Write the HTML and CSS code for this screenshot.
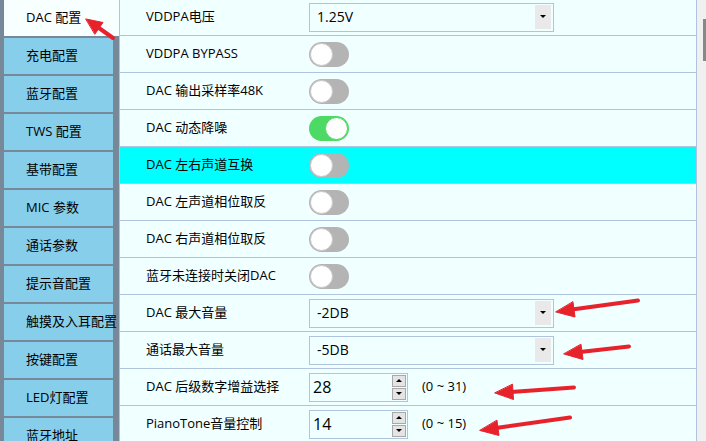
FILE: index.html
```html
<!DOCTYPE html>
<html lang="zh">
<head>
<meta charset="utf-8">
<title>DAC 配置</title>
<link rel="stylesheet" href="styles.css">
</head>
<body>
<div class="app">
  <nav class="tabs">
    <div class="tab active">DAC 配置</div>
    <div class="tab">充电配置</div>
    <div class="tab">蓝牙配置</div>
    <div class="tab">TWS 配置</div>
    <div class="tab">基带配置</div>
    <div class="tab">MIC 参数</div>
    <div class="tab">通话参数</div>
    <div class="tab">提示音配置</div>
    <div class="tab">触摸及入耳配置</div>
    <div class="tab">按键配置</div>
    <div class="tab">LED灯配置</div>
    <div class="tab">蓝牙地址</div>
  </nav>
  <main class="panel">
    <div class="rows">
      <div class="row">
        <div class="label">VDDPA电压</div>
        <div class="select"><span>1.25V</span><span class="drop"><i class="tri-down"></i></span></div>
      </div>
      <div class="row">
        <div class="label">VDDPA BYPASS</div>
        <div class="toggle"><span class="knob"></span></div>
      </div>
      <div class="row">
        <div class="label">DAC 输出采样率48K</div>
        <div class="toggle"><span class="knob"></span></div>
      </div>
      <div class="row">
        <div class="label">DAC 动态降噪</div>
        <div class="toggle on"><span class="knob"></span></div>
      </div>
      <div class="row hl">
        <div class="label">DAC 左右声道互换</div>
        <div class="toggle"><span class="knob"></span></div>
      </div>
      <div class="row">
        <div class="label">DAC 左声道相位取反</div>
        <div class="toggle"><span class="knob"></span></div>
      </div>
      <div class="row">
        <div class="label">DAC 右声道相位取反</div>
        <div class="toggle"><span class="knob"></span></div>
      </div>
      <div class="row">
        <div class="label">蓝牙未连接时关闭DAC</div>
        <div class="toggle"><span class="knob"></span></div>
      </div>
      <div class="row">
        <div class="label">DAC 最大音量</div>
        <div class="select"><span>-2DB</span><span class="drop"><i class="tri-down"></i></span></div>
      </div>
      <div class="row">
        <div class="label">通话最大音量</div>
        <div class="select"><span>-5DB</span><span class="drop"><i class="tri-down"></i></span></div>
      </div>
      <div class="row">
        <div class="label">DAC 后级数字增益选择</div>
        <div class="spin"><span class="val">28</span><span class="btns"><span class="btn"><i class="tri-up"></i></span><span class="btn"><i class="tri-down"></i></span></span></div>
        <div class="range">(0 ~ 31)</div>
      </div>
      <div class="row">
        <div class="label">PianoTone音量控制</div>
        <div class="spin"><span class="val">14</span><span class="btns"><span class="btn"><i class="tri-up"></i></span><span class="btn"><i class="tri-down"></i></span></span></div>
        <div class="range">(0 ~ 15)</div>
      </div>
    </div>
  </main>
  <div class="scroll"><div class="thumb"></div></div>
  <svg class="arrows" width="706" height="441" viewBox="0 0 706 441">
    <g fill="#e8222b" stroke="#e8222b" stroke-linecap="round" stroke-linejoin="round">
      <line x1="113" y1="38" x2="99" y2="28" stroke-width="4"/>
      <polygon points="86,19 103,22.5 95,34" stroke-width="1"/>
      <line x1="638" y1="300.5" x2="572" y2="309.5" stroke-width="4"/>
      <polygon points="556,312 575,317 573,302" stroke-width="1"/>
      <line x1="629" y1="346.5" x2="580" y2="352" stroke-width="4"/>
      <polygon points="564,354 583,359.5 581,344.5" stroke-width="1"/>
      <line x1="574" y1="387.5" x2="511" y2="392" stroke-width="4"/>
      <polygon points="495,393 513.5,399.5 512.5,384.5" stroke-width="1"/>
      <line x1="570" y1="417.5" x2="496" y2="428" stroke-width="4"/>
      <polygon points="480,430.5 499,435.5 497,420.5" stroke-width="1"/>
    </g>
  </svg>
</div>
</body>
</html>
```

FILE: styles.css
```css
html, body {
  margin: 0;
  padding: 0;
}
body {
  width: 706px;
  height: 441px;
  overflow: hidden;
  font-family: "Open Sans", "Noto Sans CJK SC", sans-serif;
  font-size: 13px;
  color: #000;
}
.app {
  position: relative;
  display: flex;
  width: 706px;
  height: 441px;
  overflow: hidden;
  background: #f0f0f0;
}
.tabs {
  flex: none;
  width: 119px;
  box-sizing: border-box;
  padding-left: 4px;
  background: #778899;
  display: flex;
  flex-direction: column;
  gap: 2px;
  overflow: hidden;
}
.tab {
  flex: none;
  width: 109px;
  height: 36px;
  box-sizing: border-box;
  padding-left: 22px;
  padding-bottom: 3px;
  display: flex;
  align-items: center;
  background: #87ceeb;
  white-space: nowrap;
}
.tab.active {
  width: 115px;
  background: #f8ffff;
}
.panel {
  flex: none;
  width: 578px;
  box-sizing: border-box;
  border-left: 1px solid #b0c4de;
  border-right: 1px solid #b0c4de;
  background: #f0ffff;
  overflow: hidden;
}
.rows {
  margin-top: -1px;
}
.row {
  height: 36px;
  border-bottom: 1px solid #b0c4de;
  display: flex;
  align-items: center;
}
.row.hl {
  background: #00ffff;
}
.label {
  flex: none;
  width: 189px;
  box-sizing: border-box;
  padding-left: 26px;
  padding-bottom: 3px;
  white-space: nowrap;
}
.select {
  width: 245px;
  height: 29px;
  box-sizing: border-box;
  border: 1px solid #b0c4de;
  background: #f0ffff;
  display: flex;
  align-items: center;
  padding-left: 7px;
  padding-right: 2px;
  padding-bottom: 1px;
  font-size: 14px;
}
.drop {
  margin-left: auto;
  width: 16px;
  height: 24px;
  background: #e9e9e9;
  display: flex;
  align-items: center;
  justify-content: center;
}
.tri-down {
  width: 0;
  height: 0;
  border-left: 3px solid transparent;
  border-right: 3px solid transparent;
  border-top: 3px solid #000;
}
.tri-up {
  width: 0;
  height: 0;
  border-left: 3px solid transparent;
  border-right: 3px solid transparent;
  border-bottom: 3px solid #000;
}
.toggle {
  width: 40px;
  height: 25px;
  box-sizing: border-box;
  border-radius: 13px;
  background: #b4b4b4;
  padding: 1px;
  display: flex;
  justify-content: flex-start;
}
.toggle.on {
  background: #4cd964;
  justify-content: flex-end;
}
.knob {
  width: 23px;
  height: 23px;
  box-sizing: border-box;
  border-radius: 50%;
  background: #fff;
  border: 1px solid #c8c8c8;
}
.toggle.on .knob {
  border-color: #4cd964;
}
.spin {
  width: 99px;
  height: 29px;
  box-sizing: border-box;
  border: 1px solid #b0c4de;
  background: #f0ffff;
  display: flex;
  align-items: center;
  padding-left: 3px;
  padding-right: 1px;
  font-size: 16px;
}
.btns {
  margin-left: auto;
  width: 14px;
  height: 25px;
  display: flex;
  flex-direction: column;
  gap: 1px;
}
.btn {
  flex: 1;
  box-sizing: border-box;
  border: 1px solid #a8a8a8;
  background: #e4e4e4;
  display: flex;
  align-items: center;
  justify-content: center;
}
.range {
  margin-left: 14px;
  font-size: 13px;
  padding-bottom: 2px;
}
.scroll {
  flex: 1;
  background: #f0f0f0;
  display: flex;
  flex-direction: column;
  align-items: flex-end;
}
.thumb {
  margin-top: 19px;
  width: 3px;
  height: 42px;
  background: #888;
}
.arrows {
  position: absolute;
  left: 0;
  top: 0;
  pointer-events: none;
}
```
